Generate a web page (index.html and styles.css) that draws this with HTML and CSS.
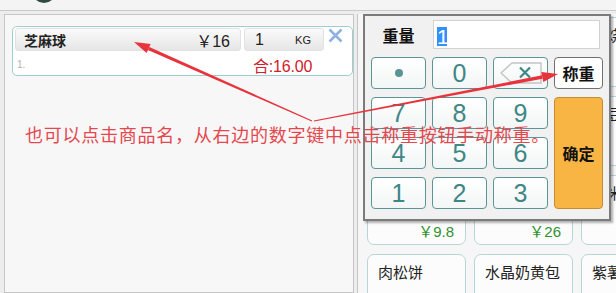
FILE: index.html
```html
<!DOCTYPE html>
<html lang="zh-CN">
<head>
    <meta charset="UTF-8">
    <title>称重</title>
    <meta name="viewport" content="width=device-width, initial-scale=1.0">
    <link rel="stylesheet" href="styles.css">
</head>
<body>

    <div class="topbar"><span class="logo"></span></div>

    <div class="main">
        <section class="cart">
            <div class="cart-item">
                <div class="item-row">
                    <div class="item-name"><span class="name">芝麻球</span><span class="price">￥16</span></div>
                    <div class="item-qty"><span class="qty">1</span><span class="unit">KG</span></div>
                    <svg class="item-del" width="15" height="15" viewBox="0 0 15 15">
                        <path d="M1.5 1.5 L13.5 13.5 M13.5 1.5 L1.5 13.5" stroke="#8fb2e2" stroke-width="2.6" fill="none"/>
                    </svg>
                </div>
                <div class="item-row2">
                    <span class="idx">1.</span>
                    <span class="total">合:16.00</span>
                </div>
            </div>
        </section>

        <section class="goods">
            <div class="tile"><span class="tile-name">桃酥饼</span></div>
            <div class="tile"><span class="tile-name">豆沙包</span></div>
            <div class="tile"><span class="tile-name">叉烧包</span></div>
            <div class="tile"><span class="tile-name">蛋黄酥</span></div>
            <div class="tile"><span class="tile-name">椰蓉包</span></div>
            <div class="tile"><span class="tile-name">绿豆糕</span></div>
            <div class="tile"><span class="tile-name">菠萝包</span><span class="tile-price">￥9.8</span></div>
            <div class="tile"><span class="tile-name">老婆饼</span><span class="tile-price">￥26</span></div>
            <div class="tile"><span class="tile-name">黑米糕</span><span class="tile-price">￥12</span></div>
            <div class="tile"><span class="tile-name">肉松饼</span></div>
            <div class="tile"><span class="tile-name">水晶奶黄包</span></div>
            <div class="tile"><span class="tile-name">紫薯饼</span></div>
        </section>
    </div>

    <!-- 称重数字键盘 -->
    <div class="keypad">
        <div class="kp-label">重量</div>
        <div class="kp-input"><span class="sel">1</span></div>

        <div class="key"><span class="dot"></span></div>
        <div class="key">0</div>
        <div class="key">
            <svg width="42" height="22" viewBox="0 0 42 22">
                <path d="M1 11 L12 1 L41 1 L41 21 L12 21 Z" fill="none" stroke="#c4c4c4" stroke-width="1.4"/>
                <path d="M20 5.5 L30 15.5 M30 5.5 L20 15.5" stroke="#3e8787" stroke-width="2.2"/>
            </svg>
        </div>
        <div class="key key-weigh">称重</div>

        <div class="key">7</div>
        <div class="key">8</div>
        <div class="key">9</div>
        <div class="key key-ok">确定</div>

        <div class="key">4</div>
        <div class="key">5</div>
        <div class="key">6</div>

        <div class="key">1</div>
        <div class="key">2</div>
        <div class="key">3</div>
    </div>

    <p class="note">也可以点击商品名，从右边的数字键中点击称重按钮手动称重。</p>

    <svg class="arrows" width="616" height="293" viewBox="0 0 616 293">
        <polygon points="312.2,120.5 149.3,46.9 147.9,50.1 311.8,121.5" fill="#e8323c"/>
        <polygon points="134,42 150.6,43.9 146.6,53.1" fill="#e8323c"/>
        <polygon points="313.9,120.4 542.0,75.3 542.6,78.7 314.1,121.6" fill="#e8323c"/>
        <polygon points="558,74 543.3,81.9 541.3,72.1" fill="#e8323c"/>
    </svg>

</body>
</html>
```

FILE: styles.css
```css
body {
    margin: 0;
    width: 616px;
    height: 293px;
    overflow: hidden;
    position: relative;
    background-color: #ededed;
    font-family: "Liberation Sans", "Noto Sans CJK SC", sans-serif;
    color: #222;
}

.topbar {
    height: 10px;
    background-color: #f4f4f4;
    border-bottom: 1px solid #c9c9c9;
    overflow: hidden;
    padding-left: 32px;
}

.logo {
    display: block;
    width: 24px;
    height: 24px;
    margin-top: -21px;
    border-radius: 50%;
    background-color: #2f4b3f;
}

.main {
    display: flex;
    padding: 3px 0 0 4px;
    gap: 3px;
    height: 279px;
}

.cart {
    width: 350px;
    box-sizing: border-box;
    border: 1px solid #c6c6c6;
    background-color: #f7f7f7;
    padding: 11px 0 0 7px;
}

.cart-item {
    width: 341px;
    box-sizing: border-box;
    border: 1px solid #9ccfd0;
    border-radius: 5px;
    background-color: white;
    padding: 1px 2px 0 2px;
}

.item-row {
    display: flex;
    align-items: center;
    height: 23px;
}

.item-name,
.item-qty {
    display: flex;
    align-items: center;
    height: 23px;
    box-sizing: border-box;
    border-radius: 3px;
    background: linear-gradient(#fafafa, #e6e6e6);
    border: 1px solid #e2e2e2;
}

.item-name {
    width: 226px;
    padding: 0 10px 0 8px;
    justify-content: space-between;
}

.name {
    font-family: "Noto Sans CJK SC", sans-serif;
    font-weight: bold;
    font-size: 14px;
}

.price {
    font-size: 16px;
}

.item-qty {
    width: 80px;
    margin-left: 3px;
    padding: 0 12px 0 10px;
    justify-content: space-between;
    font-size: 16px;
}

.unit {
    font-size: 11px;
}

.item-del {
    margin-left: 4px;
    align-self: flex-start;
}

.item-row2 {
    display: flex;
    align-items: center;
    height: 21px;
    padding-top: 3px;
}

.idx {
    flex: 0 0 238px;
    padding-left: 2px;
    box-sizing: border-box;
    font-size: 10px;
    color: #b0b0b0;
}

.total {
    font-size: 16px;
    letter-spacing: -0.2px;
    color: #d3202a;
}

.goods {
    flex: 1;
    border-left: 1px solid #c6c6c6;
    background-color: #f6f6f6;
    padding: 3px 0 0 9px;
    display: grid;
    grid-template-columns: repeat(3, 99px);
    grid-auto-rows: 70px;
    column-gap: 8px;
    row-gap: 9px;
    align-content: start;
}

.tile {
    border: 1px solid #b7d7d6;
    border-radius: 7px;
    background-color: #fcfcfc;
    display: flex;
    flex-direction: column;
    justify-content: space-between;
    padding: 7px 11px 3px 10px;
}

.tile-name {
    font-family: "Noto Sans CJK SC", sans-serif;
    font-size: 15px;
    line-height: 20px;
    color: #222;
}

.tile-price {
    align-self: flex-end;
    font-size: 15px;
    color: #2f922f;
}

.keypad {
    position: absolute;
    left: 363px;
    top: 14px;
    width: 248px;
    height: 207px;
    box-sizing: border-box;
    border: 2px solid #7b7b7b;
    box-shadow: 2px 2px 2px rgba(0, 0, 0, 0.3);
    background-color: #f1f1f1;
    padding: 4px 0 0 6px;
    display: grid;
    grid-template-columns: 55px 55px 55px 49px;
    grid-template-rows: 29px 32px 32px 32px 32px;
    column-gap: 6px;
    row-gap: 8px;
}

.kp-label {
    display: flex;
    align-items: center;
    justify-content: center;
    font-family: "Noto Sans CJK SC", sans-serif;
    font-weight: bold;
    font-size: 16px;
    color: #111;
}

.kp-input {
    grid-column: 2 / 5;
    margin: 0 3px 0 1px;
    background-color: white;
    border: 1px solid #d2d2d2;
    padding: 6px 0 0 3px;
    box-sizing: border-box;
}

.sel {
    display: inline-block;
    background-color: #3391ff;
    color: white;
    font-size: 21px;
    line-height: 19px;
    width: 10px;
    text-align: center;
}

.key {
    display: flex;
    align-items: center;
    justify-content: center;
    box-sizing: border-box;
    border: 1px solid #5c9595;
    border-radius: 4px;
    background: linear-gradient(#ffffff, #f3f6f6);
    font-size: 25px;
    color: #3e8787;
}

.dot {
    width: 8px;
    height: 8px;
    border-radius: 50%;
    background-color: #5b9494;
}

.key-weigh {
    border-color: #707070;
    background: white;
    font-family: "Noto Sans CJK SC", sans-serif;
    font-weight: bold;
    font-size: 16px;
    color: #111;
}

.key-ok {
    grid-column: 4;
    grid-row: 3 / 6;
    border-color: #c48d32;
    background: #f8b543;
    font-family: "Noto Sans CJK SC", sans-serif;
    font-weight: bold;
    font-size: 16px;
    color: #111;
}

.note {
    position: absolute;
    left: 25px;
    top: 123px;
    margin: 0;
    font-family: "Noto Sans CJK SC", sans-serif;
    font-size: 18px;
    line-height: 22px;
    letter-spacing: 0.75px;
    color: #e4484f;
    white-space: nowrap;
}

.arrows {
    position: absolute;
    left: 0;
    top: 0;
    pointer-events: none;
}
```
